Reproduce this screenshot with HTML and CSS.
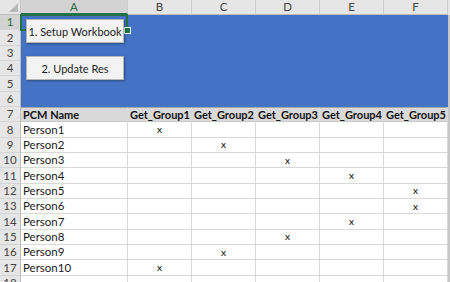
FILE: index.html
```html
<!DOCTYPE html>
<html lang="en">
<head>
    <meta charset="UTF-8">
    <meta name="viewport" content="width=device-width, initial-scale=1.0">
    <title>PCM Groups</title>
    <link rel="stylesheet" href="styles.css">
</head>
<body>

    <div class="sheet">
        <div class="grid"></div>

        <!-- selected cell A1 -->
        <div class="selection"><span class="handle"></span></div>

        <!-- macro buttons floating over the sheet -->
        <button class="macro-btn btn-setup">1. Setup Workbook</button>
        <button class="macro-btn btn-update">2. Update Res</button>
    </div>

    <script>
        const grid = document.querySelector('.grid');
        const cols = ['A', 'B', 'C', 'D', 'E', 'F'];
        const groups = ['Get_Group1', 'Get_Group2', 'Get_Group3', 'Get_Group4', 'Get_Group5'];

        // which group column each person is marked in (0 = B)
        const marks = [0, 1, 2, 3, 4, 4, 3, 2, 1, 0];

        function addCell(cls, text) {
            const cell = document.createElement('div');
            cell.className = cls;
            if (text) cell.textContent = text;
            grid.appendChild(cell);
            return cell;
        }

        // column headers
        addCell('corner');
        cols.forEach(c => addCell(c === 'A' ? 'col-head active' : 'col-head', c));
        addCell('edge head-edge');

        for (let r = 1; r <= 18; r++) {
            addCell(r === 1 ? 'row-head active' : 'row-head', String(r));

            for (let c = 0; c < cols.length; c++) {
                if (r <= 6) {
                    addCell('cell blue');
                } else if (r === 7) {
                    addCell('cell title', c === 0 ? 'PCM Name' : groups[c - 1]);
                } else if (r <= 17) {
                    const person = r - 8;
                    if (c === 0) {
                        addCell('cell name', 'Person' + (person + 1));
                    } else {
                        addCell('cell mark', marks[person] === c - 1 ? 'x' : '');
                    }
                } else {
                    addCell('cell');
                }
            }
            addCell('edge');
        }
    </script>
</body>
</html>
```

FILE: styles.css
```css
body {
    margin: 0;
    width: 450px;
    height: 282px;
    overflow: hidden;
    background-color: #ffffff;
    font-family: Lato, "Noto Sans", sans-serif;
    font-size: 11px;
    color: #1a1a1a;
}

.sheet {
    position: relative;
    width: 450px;
    height: 282px;
    overflow: hidden;
}

.grid {
    display: grid;
    grid-template-columns: 21px 107px repeat(5, 64px) 2px;
    grid-template-rows: 15px repeat(18, 15.33px);
}

/* headers */
.corner {
    position: relative;
    background-color: #e6e6e6;
    border-right: 1px solid #c8c8c8;
    border-bottom: 1px solid #bdbdbd;
    box-sizing: border-box;
}

.corner::after {
    content: "";
    position: absolute;
    right: 2px;
    bottom: 2px;
    border-left: 9px solid transparent;
    border-bottom: 9px solid #b8b8b8;
}

.col-head {
    background-color: #e6e6e6;
    border-right: 1px solid #cdcdcd;
    border-bottom: 1px solid #bdbdbd;
    box-sizing: border-box;
    display: flex;
    justify-content: center;
    align-items: center;
    color: #444;
    font-size: 11.5px;
    line-height: 1;
}

.col-head.active {
    background-color: #d3d3d3;
    color: #1e6b42;
    border-bottom: 2px solid #217346;
}

.row-head {
    background-color: #e6e6e6;
    border-right: 1px solid #bdbdbd;
    border-bottom: 1px solid #d4d4d4;
    box-sizing: border-box;
    display: flex;
    justify-content: center;
    align-items: center;
    color: #444;
    font-size: 11.5px;
    line-height: 1;
}

.row-head.active {
    background-color: #d3d3d3;
    color: #1e6b42;
}

.edge {
    background-color: #c6c6c6;
}

.head-edge {
    background-color: #e6e6e6;
}

/* cells */
.cell {
    border-right: 1px solid #d9d9d9;
    border-bottom: 1px solid #d9d9d9;
    box-sizing: border-box;
    display: flex;
    align-items: center;
    padding: 0 2px;
    white-space: nowrap;
    overflow: hidden;
    line-height: 1;
}

.cell.blue {
    background-color: #4472c4;
    border-color: #4472c4;
}

.cell.title {
    background-color: #d9d9d9;
    border-right-color: #d9d9d9;
    border-top: 1px solid #a6a6a6;
    border-bottom-color: #c8c8c8;
    font-weight: bold;
    font-size: 11px;
    color: #111;
    overflow: visible;
}

.cell.name {
    font-size: 11.5px;
}

.cell.mark {
    justify-content: center;
    font-size: 10px;
    color: #000;
    padding-bottom: 1px;
}

/* A1 selection box */
.selection {
    position: absolute;
    left: 20px;
    top: 14px;
    width: 104px;
    height: 13px;
    border: 2px solid #217346;
}

.handle {
    position: absolute;
    right: -5px;
    bottom: -5px;
    width: 5px;
    height: 5px;
    background-color: #217346;
    border: 1px solid #ffffff;
}

/* floating macro buttons */
.macro-btn {
    position: absolute;
    left: 26px;
    width: 98px;
    height: 24px;
    padding: 0;
    white-space: nowrap;
    font-family: Lato, "Noto Sans", sans-serif;
    font-size: 11px;
    color: #222;
    background-color: #f3f3f3;
    border: 1px solid #b5b5b5;
    box-shadow: 1px 1px 2px rgba(0, 0, 0, 0.35);
}

.btn-setup {
    top: 19px;
}

.btn-update {
    top: 56px;
}
```
